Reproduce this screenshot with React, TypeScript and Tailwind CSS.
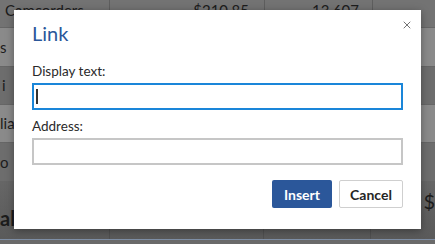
import { X } from "lucide-react";

const rows = [
  { h: "h-[28px]", bg: "bg-[#737373]", cells: ["Camcorders", "$210.85", "13,607"], pad: "pl-[5px]", align: "items-start pt-[2px] leading-[16px]" },
  { h: "h-[39px]", bg: "bg-[#8a8a8a]", cells: ["s", "", ""], pad: "pl-0", align: "items-center" },
  { h: "h-[38px]", bg: "bg-[#6d6d6d]", cells: ["i", "", ""], pad: "pl-[2px]", align: "items-center" },
  { h: "h-[38px]", bg: "bg-[#8a8a8a]", cells: ["lia", "", ""], pad: "pl-0", align: "items-center" },
  { h: "h-[39px]", bg: "bg-[#6d6d6d]", cells: ["o", "", ""], pad: "pl-0", align: "items-center" },
];

function Sheet() {
  return (
    <div className="w-[435px] h-[244px] bg-[#6a6a6a] text-[#1c1c1c] font-['Segoe_UI',Lato,sans-serif] text-[15px]">
      {rows.map((r, i) => (
        <div key={i} className={`flex ${r.h} ${r.bg} border-b border-[#666]`}>
          <div className={`w-[110px] flex whitespace-nowrap border-r border-[#5e5e5e] ${r.pad} ${r.align}`}>
            {r.cells[0]}
          </div>
          <div className={`w-[155px] flex justify-end pr-[15px] border-r border-[#5e5e5e] ${r.align}`}>{r.cells[1]}</div>
          <div className={`w-[108px] flex justify-end pr-[13px] border-r border-[#5e5e5e] ${r.align}`}>{r.cells[2]}</div>
          <div className="flex-1" />
        </div>
      ))}
      <div className="flex h-[58px] bg-gradient-to-b from-[#666] to-[#5a5a5a] border-b border-[#7f8fa6]">
        <div className="w-[110px] flex items-center whitespace-nowrap pt-[14px] text-[20px] font-bold border-r border-[#505050]">
          ale
        </div>
        <div className="w-[155px] border-r border-[#505050]" />
        <div className="w-[108px] border-r border-[#505050]" />
        <div className="flex-1 flex items-start pt-[4px] pl-[52px] text-[20px]">$</div>
      </div>
    </div>
  );
}

export default function App() {
  return (
    <div className="relative w-[435px] h-[244px] overflow-hidden">
      <Sheet />
      <div className="absolute left-[14px] top-[10px] w-[407px] h-[219px] bg-white shadow-[0_2px_8px_rgba(0,0,0,0.35)] px-[18px] pt-[11px] font-['Segoe_UI',Lato,sans-serif]">
        <button className="absolute right-[6px] top-[7px] w-[16px] h-[16px] flex items-center justify-center text-[#444]">
          <X className="w-[12px] h-[12px]" strokeWidth={1.5} />
        </button>
        <h2 className="text-[20px] leading-[24px] text-[#2b579a]">Link</h2>
        <div className="mt-[16px] text-[13.5px] leading-[20px] text-[#2a2a2a]">Display text:</div>
        <div className="mt-[2px] h-[27px] border-2 border-[#1a86d9] flex items-center pl-[2px]">
          <div className="w-[2px] h-[15px] bg-[#333]" />
        </div>
        <div className="mt-[6px] text-[13.5px] leading-[20px] text-[#2a2a2a]">Address:</div>
        <div className="mt-[2px] h-[27px] border-2 border-[#c6c6c6]" />
        <div className="mt-[15px] flex justify-end gap-[7px]">
          <button className="w-[60px] h-[28px] rounded-[2px] bg-[#2b579a] text-white text-[14px] font-bold">Insert</button>
          <button className="w-[64px] h-[28px] rounded-[2px] bg-white border border-[#cfcfcf] text-[#252525] text-[14px] font-bold">Cancel</button>
        </div>
      </div>
    </div>
  );
}
